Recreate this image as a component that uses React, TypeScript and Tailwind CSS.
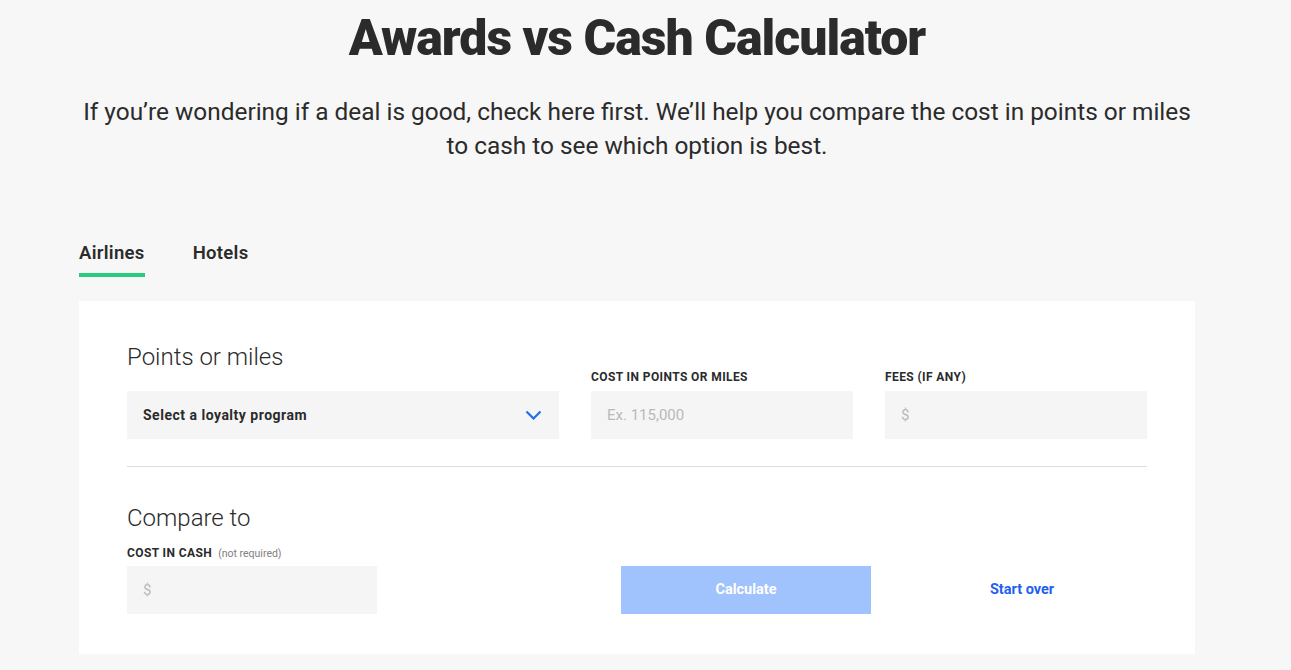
import React from "react";

export default function App() {
  return (
    <div className="min-h-[670px] w-full bg-[#f7f7f7] text-[#2b2b2b]" style={{ fontFamily: "Roboto, 'Liberation Sans', sans-serif" }}>
      <div className="ml-[79px] w-[1116px]">
        <h1 className="pt-[8px] text-center text-[50px] font-black leading-[60px] tracking-[-1px] text-[#2b2b2b]">
          Awards vs Cash Calculator
        </h1>
        <p className="mt-[27px] text-center text-[24.4px] font-normal leading-[34px] text-[#2b2b2b]">
          If you’re wondering if a deal is good, check here first. We’ll help you compare the cost in points or miles to cash to see which option is best.
        </p>

        <div className="mt-[78px] flex gap-[48px]">
          <div className="flex flex-col">
            <span className="text-[18.5px] font-semibold leading-[24px] tracking-[0.3px]">Airlines</span>
            <div className="mt-[8px] h-[4px] w-full bg-[#26cc7b]" />
          </div>
          <div className="flex flex-col">
            <span className="text-[18.5px] font-semibold leading-[24px] tracking-[0.3px]">Hotels</span>
          </div>
        </div>

        <div className="mt-[24px] bg-white px-12 pb-[40px] pt-[41px]">
          <div className="grid grid-cols-[432px_262px_262px] items-end gap-x-8">
            <div className="flex flex-col">
              <h2 className="text-[24px] font-light leading-[30px] text-[#2b2b2b]">Points or miles</h2>
              <div className="mt-[19px] flex h-12 items-center justify-between bg-[#f5f5f5] pl-4 pr-[17px]">
                <span className="text-[14px] font-bold tracking-[0.5px] text-[#2b2b2b]">Select a loyalty program</span>
                <svg width="17" height="10" viewBox="0 0 17 10" fill="none">
                  <path d="M1.5 1.5 L8.5 8.5 L15.5 1.5" stroke="#1f6ff2" strokeWidth="2.2" />
                </svg>
              </div>
            </div>
            <div className="flex flex-col">
              <label className="text-[12px] font-bold uppercase leading-[16px] tracking-[0.4px] text-[#2b2b2b]">Cost in points or miles</label>
              <div className="mt-[6px] flex h-12 items-center bg-[#f5f5f5] px-4 text-[15px] text-[#b9b9b9]">Ex. 115,000</div>
            </div>
            <div className="flex flex-col">
              <label className="text-[12px] font-bold uppercase leading-[16px] tracking-[0.4px] text-[#2b2b2b]">Fees (if any)</label>
              <div className="mt-[6px] flex h-12 items-center bg-[#f5f5f5] px-4 text-[15px] text-[#b9b9b9]">$</div>
            </div>
          </div>

          <div className="mt-[27px] h-px bg-[#dddddd]" />

          <h2 className="mt-[36px] text-[24px] font-light leading-[30px] text-[#2b2b2b]">Compare to</h2>
          <div className="mt-[12px] flex items-baseline gap-[6px]">
            <span className="text-[12px] font-bold uppercase leading-[16px] tracking-[0.4px]">Cost in cash</span>
            <span className="text-[10.5px] text-[#808080]">(not required)</span>
          </div>
          <div className="mt-[4px] flex items-center">
            <div className="flex h-12 w-[250px] items-center bg-[#f5f5f5] px-4 text-[15px] text-[#b9b9b9]">$</div>
            <button className="ml-[244px] flex h-12 w-[250px] items-center justify-center bg-[#a1c3fd] text-[14.5px] font-bold text-white">Calculate</button>
            <button className="ml-[26px] flex h-12 w-[250px] items-center justify-center text-[14.5px] font-bold text-[#1f5ff5]">Start over</button>
          </div>
        </div>
      </div>
    </div>
  );
}
